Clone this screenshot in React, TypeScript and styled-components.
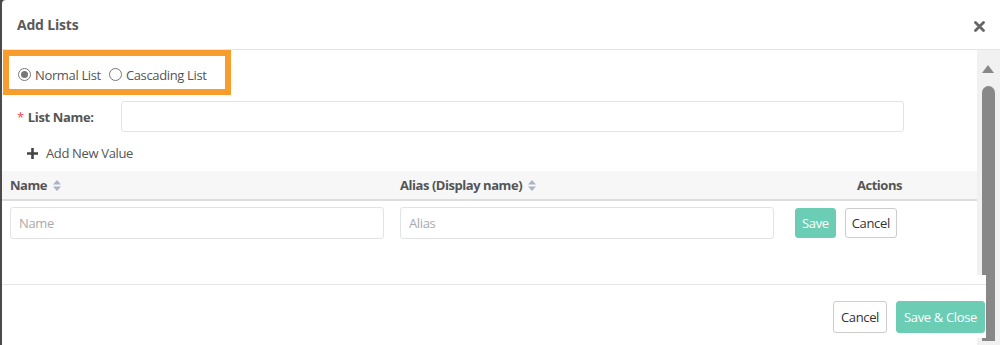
import React from "react";
import styled, { createGlobalStyle } from "styled-components";

const Global = createGlobalStyle`
  * { box-sizing: border-box; }
  html, body { margin: 0; padding: 0; }
  body {
    background: #4a4a4a;
    font-family: "Open Sans", "Noto Sans", sans-serif;
    font-size: 13px;
    letter-spacing: -0.35px;
    color: #555;
    overflow: hidden;
  }
  input, button { letter-spacing: -0.35px; }
`;

const Modal = styled.div`
  margin-left: 2px;
  width: 998px;
  height: 345px;
  background: #fff;
  border-top-left-radius: 4px;
  display: flex;
  flex-direction: column;
  overflow: hidden;
`;

const Header = styled.div`
  height: 50px;
  flex: none;
  display: flex;
  align-items: center;
  justify-content: space-between;
  padding: 0 15px 0 15px;
  border-bottom: 1px solid #e5e5e5;
`;

const Title = styled.h4`
  margin: 0;
  font-size: 14px;
  font-weight: 700;
  letter-spacing: -0.2px;
  color: #5a5a5a;
`;

const CloseBtn = styled.button`
  border: 0;
  background: none;
  padding: 0;
  display: flex;
  margin-top: 3px;
`;

const Main = styled.div`
  flex: 1;
  display: flex;
  min-height: 0;
`;

const Content = styled.div`
  flex: 1;
  display: flex;
  flex-direction: column;
  min-width: 0;
`;

const Track = styled.div`
  width: 23px;
  flex: none;
  background: #f1f1f1;
  display: flex;
  flex-direction: column;
  align-items: center;
  padding: 15px 5px 4px 5px;
`;

const UpArrow = styled.div`
  width: 0;
  height: 0;
  border-left: 6.5px solid transparent;
  border-right: 6.5px solid transparent;
  border-bottom: 8px solid #888;
  margin-left: -2px;
`;

const Thumb = styled.div`
  margin-top: 13px;
  flex: 1;
  width: 13px;
  background: #888;
  border-radius: 7px 7px 0 0;
`;

const Body = styled.div`
  flex: 1;
  display: flex;
  flex-direction: column;
`;

const RadioBox = styled.div`
  margin-left: 1px;
  width: 228px;
  height: 45px;
  border: 6px solid #f79c2d;
  display: flex;
  align-items: center;
  gap: 8px;
  padding: 4px 0 0 9px;
`;

const RadioLabel = styled.label`
  display: flex;
  align-items: center;
  gap: 4px;
  color: #555;
  font-size: 13px;
`;

const RadioCircle = styled.span<{ $checked?: boolean }>`
  width: 13px;
  height: 13px;
  border-radius: 50%;
  border: 1px solid #777;
  display: flex;
  align-items: center;
  justify-content: center;
  background: #fff;
  &::after {
    content: "";
    width: 7px;
    height: 7px;
    border-radius: 50%;
    background: ${(p) => (p.$checked ? "#777" : "transparent")};
  }
`;

const FieldRow = styled.div`
  display: flex;
  align-items: center;
  margin-top: 6px;
  padding-left: 15px;
  padding-right: 73px;
`;

const Label = styled.label`
  width: 104px;
  flex: none;
  font-weight: 700;
  color: #555;
  display: flex;
  gap: 4px;
`;

const Req = styled.span`
  color: #e8494f;
  font-weight: 400;
`;

const TextInput = styled.input<{ $h?: number }>`
  flex: 1;
  min-width: 0;
  height: ${(p) => p.$h ?? 31}px;
  border: 1px solid #e3e3e3;
  border-radius: 3px;
  padding: 0 8px;
  font-family: inherit;
  font-size: 13px;
  color: #555;
  outline: none;
  &::placeholder { color: #aaa; }
`;

const AddValue = styled.div`
  display: flex;
  align-items: center;
  gap: 8px;
  padding-left: 25px;
  margin-top: 11px;
  height: 20px;
  color: #555;
`;

const Table = styled.div`
  margin-top: 8px;
  display: grid;
  grid-template-columns: 390px 390px 1fr;
`;

const HeadCell = styled.div<{ $center?: boolean }>`
  background: #f7f7f7;
  height: 30px;
  border-bottom: 2px solid #ddd;
  display: flex;
  align-items: center;
  justify-content: ${(p) => (p.$center ? "center" : "flex-start")};
  gap: 6px;
  padding: 0 8px;
  font-weight: 700;
  letter-spacing: -0.45px;
  color: #555;
`;

const Cell = styled.div`
  padding: 6px 8px 0 8px;
  display: flex;
  align-items: flex-start;
  gap: 9px;
`;

const ActionCell = styled(Cell)`
  padding-left: 13px;
  padding-top: 7px;
`;

const Btn = styled.button<{ $primary?: boolean; $h?: number }>`
  height: ${(p) => p.$h ?? 30}px;
  padding: 0 6px;
  border-radius: 3px;
  font-family: inherit;
  font-size: 13px;
  border: 1px solid ${(p) => (p.$primary ? "#6ccdb5" : "#ccc")};
  background: ${(p) => (p.$primary ? "#6ccdb5" : "#fff")};
  color: ${(p) => (p.$primary ? "#fff" : "#333")};
`;

const FooterBtn = styled(Btn)`
  padding: 0 7px;
`;

const Footer = styled.div`
  position: relative;
  z-index: 1;
  margin-right: -9px;
  background: #fff;
  padding-top: 9px;
  height: 63px;
  flex: none;
  margin-bottom: 7px;
`;

const FooterBar = styled.div`
  border-top: 1px solid #e5e5e5;
  display: flex;
  justify-content: flex-end;
  gap: 9px;
  padding: 16px 1px 0 0;
`;

const SortIcon = () => (
  <svg width="8" height="11" viewBox="0 0 8 11">
    <path d="M4 0 L8 4.5 H0 Z" fill="#aab4c6" />
    <path d="M4 11 L8 6.5 H0 Z" fill="#aab4c6" />
  </svg>
);

const PlusIcon = () => (
  <svg width="11" height="11" viewBox="0 0 11 11">
    <path d="M5.5 0 V11 M0 5.5 H11" stroke="#444" strokeWidth="2.6" />
  </svg>
);

const CloseIcon = () => (
  <svg width="11" height="11" viewBox="0 0 11 11">
    <path d="M1.5 1.5 L9.5 9.5 M9.5 1.5 L1.5 9.5" stroke="#666" strokeWidth="2.8" strokeLinecap="round" />
  </svg>
);

export default function App() {
  return (
    <>
      <Global />
      <Modal>
        <Header>
          <Title>Add Lists</Title>
          <CloseBtn aria-label="close">
            <CloseIcon />
          </CloseBtn>
        </Header>
        <Main>
          <Content>
            <Body>
              <RadioBox>
                <RadioLabel>
                  <RadioCircle $checked />
                  Normal List
                </RadioLabel>
                <RadioLabel>
                  <RadioCircle />
                  Cascading List
                </RadioLabel>
              </RadioBox>
              <FieldRow>
                <Label>
                  <Req>*</Req>List Name:
                </Label>
                <TextInput />
              </FieldRow>
              <AddValue>
                <PlusIcon />
                Add New Value
              </AddValue>
              <Table>
                <HeadCell>
                  Name <SortIcon />
                </HeadCell>
                <HeadCell>
                  Alias (Display name) <SortIcon />
                </HeadCell>
                <HeadCell $center>Actions</HeadCell>
                <Cell>
                  <TextInput $h={32} placeholder="Name" />
                </Cell>
                <Cell>
                  <TextInput $h={32} placeholder="Alias" />
                </Cell>
                <ActionCell>
                  <Btn $primary>Save</Btn>
                  <Btn>Cancel</Btn>
                </ActionCell>
              </Table>
            </Body>
            <Footer>
              <FooterBar>
                <FooterBtn $h={32}>Cancel</FooterBtn>
                <FooterBtn $primary $h={32}>
                  Save &amp; Close
                </FooterBtn>
              </FooterBar>
            </Footer>
          </Content>
          <Track>
            <UpArrow />
            <Thumb />
          </Track>
        </Main>
      </Modal>
    </>
  );
}
